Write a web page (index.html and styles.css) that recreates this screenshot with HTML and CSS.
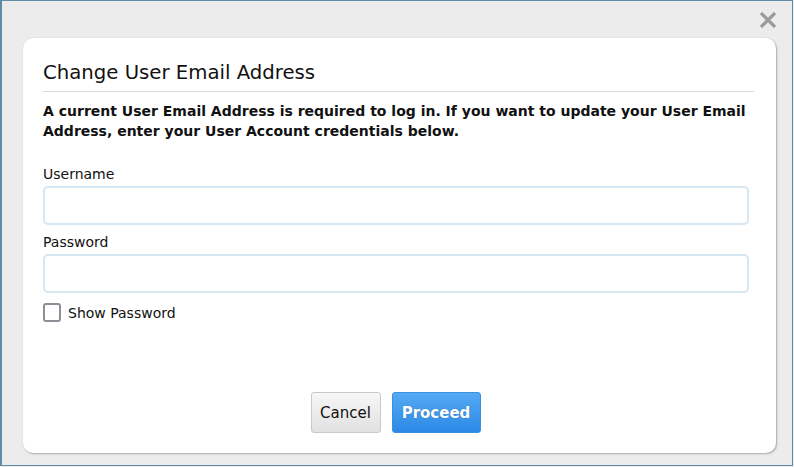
FILE: index.html
```html
<!DOCTYPE html>
<html>
<head>
<meta charset="utf-8">
<link rel="stylesheet" href="styles.css">
</head>
<body>
<div class="frame">
  <div class="closebar">
    <svg class="close" width="18" height="16" viewBox="0 0 18 16"><path d="M2 1 L16 15 M16 1 L2 15" stroke="#9a9a9a" stroke-width="3.2" stroke-linecap="butt"/></svg>
  </div>
  <div class="card">
    <h2 class="title">Change User Email Address</h2>
    <p class="intro">A current User Email Address is required to log in. If you want to update your User Email Address, enter your User Account credentials below.</p>
    <label class="label">Username</label>
    <input class="field" type="text">
    <label class="label">Password</label>
    <input class="field" type="password">
    <label class="check"><span class="box"></span>Show Password</label>
    <div class="actions">
      <button class="btn cancel">Cancel</button>
      <button class="btn proceed">Proceed</button>
    </div>
  </div>
</div>
</body>
</html>
```

FILE: styles.css
```css
* { box-sizing: border-box; }
html, body { margin: 0; padding: 0; background: #ececec; }
body { font-family: "DejaVu Sans", Verdana, sans-serif; color: #111; }
.frame {
  width: 793px;
  height: 466px;
  border: 1px solid #5e8ba6;
  border-left-width: 2px;
  background: #ececec;
  padding: 0 16px 12px 21px;
  display: flex;
  flex-direction: column;
}
.closebar { height: 37px; display: flex; justify-content: flex-end; align-items: flex-start; padding-top: 11px; }
.close { display: block; margin-right: -1px; }
.card {
  flex: 1;
  background: #fff;
  border-radius: 10px;
  box-shadow: 1px 1px 2px rgba(0,0,0,0.28), 0 0 1px rgba(0,0,0,0.15);
  padding: 23px 22px 20px 20px;
  display: flex;
  flex-direction: column;
}
.title {
  margin: 0;
  font-weight: normal;
  font-size: 19.7px;
  line-height: 24px;
  padding-bottom: 6px;
  border-bottom: 1px solid #dcdcdc;
  color: #111;
}
.intro {
  margin: 9px 0 0;
  font-weight: bold;
  font-size: 14px;
  line-height: 20px;
}
.label { display: block; font-size: 14px; line-height: 18px; margin-top: 24px; }
.field + .label { margin-top: 8px; }
.field {
  display: block;
  margin-top: 3px;
  width: 706px;
  height: 39px;
  border: 2px solid #d6e7f1;
  border-radius: 5px;
  background: #fff;
  outline: none;
}
.check { display: flex; align-items: center; font-size: 14px; margin-top: 10px; gap: 7px; }
.box { width: 18px; height: 19px; border: 2px solid #8e8e98; border-radius: 3px; background: #fff; }
.actions { margin-top: auto; display: flex; justify-content: center; gap: 11px; padding-right: 6px; }
.btn {
  height: 41px;
  border-radius: 3px;
  font-family: "DejaVu Sans", Verdana, sans-serif;
  font-size: 15px;
  padding: 0;
}
.cancel {
  width: 70px;
  border: 1px solid #c9c9c9;
  background: linear-gradient(#f7f7f7, #e1e1e1);
  color: #111;
}
.proceed {
  width: 89px;
  border: 1px solid #3b8fdc;
  background: linear-gradient(#55aaf3, #2c89e6);
  color: #fff;
  font-weight: bold;
  text-shadow: 0 0 1px rgba(0,0,0,0.35);
}
```
